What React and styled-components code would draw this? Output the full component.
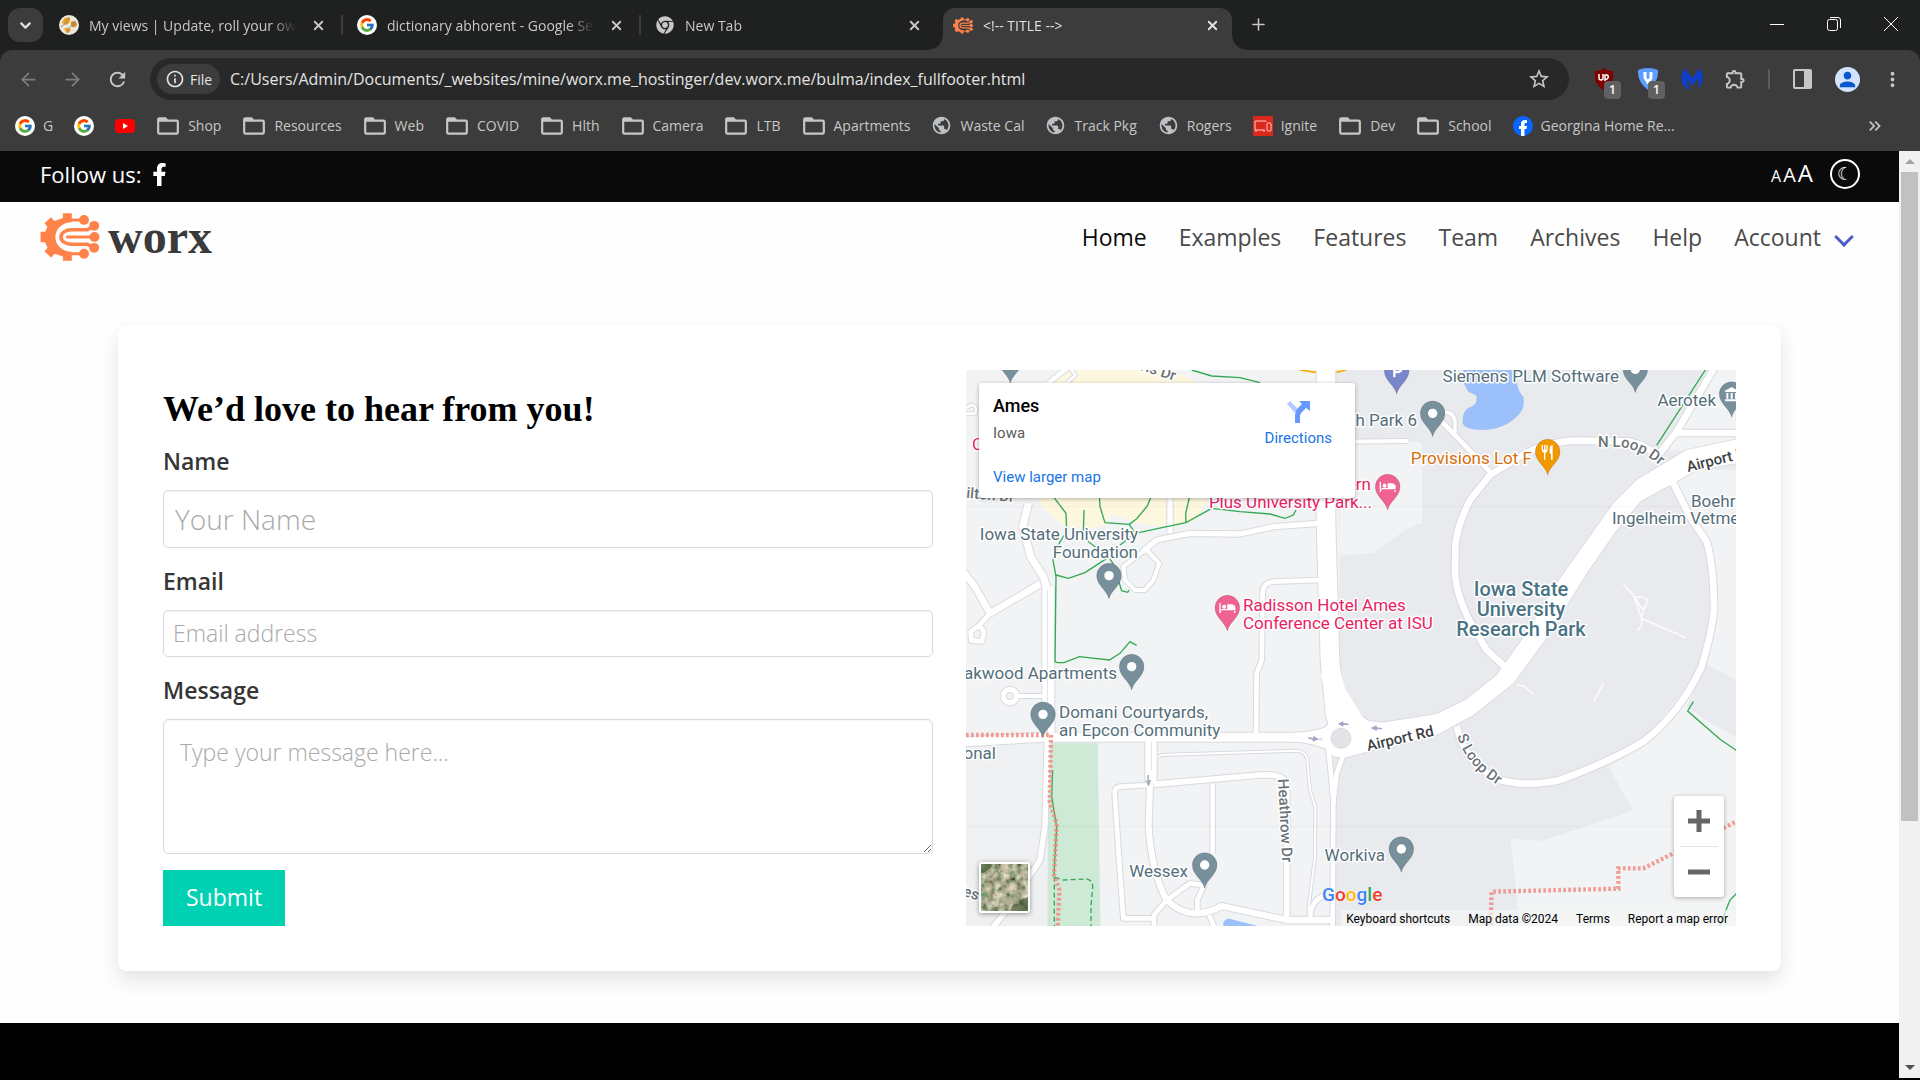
import React from 'react';
import styled, { createGlobalStyle, css } from 'styled-components';
import { ArrowLeft, ArrowRight, ChevronDown, Plus, X } from 'lucide-react';
import { FaChrome, FaFacebookF } from 'react-icons/fa';
import { FcGoogle } from 'react-icons/fc';
import {
  MdFolderOpen,
  MdInfoOutline,
  MdKeyboardDoubleArrowRight,
  MdMoreVert,
  MdOutlineExtension,
  MdPerson,
  MdPublic,
  MdRefresh,
  MdStarBorder,
} from 'react-icons/md';

const tabs = [
  { title: 'My views | Update, roll your own', icon: 'ball' },
  { title: 'dictionary abhorent - Google Search', icon: 'google' },
  { title: 'New Tab', icon: 'chrome' },
  { title: '<!-- TITLE -->', icon: 'worx', active: true },
];

const bookmarks = [
  { label: 'G', icon: 'google' },
  { label: '', icon: 'google' },
  { label: '', icon: 'youtube' },
  { label: 'Shop', icon: 'folder' },
  { label: 'Resources', icon: 'folder' },
  { label: 'Web', icon: 'folder' },
  { label: 'COVID', icon: 'folder' },
  { label: 'Hlth', icon: 'folder' },
  { label: 'Camera', icon: 'folder' },
  { label: 'LTB', icon: 'folder' },
  { label: 'Apartments', icon: 'folder' },
  { label: 'Waste Cal', icon: 'globe' },
  { label: 'Track Pkg', icon: 'globe' },
  { label: 'Rogers', icon: 'globe' },
  { label: 'Ignite', icon: 'ignite' },
  { label: 'Dev', icon: 'folder' },
  { label: 'School', icon: 'folder' },
  { label: 'Georgina Home Re...', icon: 'facebook' },
];

const navLinks = ['Home', 'Examples', 'Features', 'Team', 'Archives', 'Help'];

const SLATE = '#546e7a';
const PINK = '#e91e63';

// map geometry is drawn on a grid three times finer than the labels
const roads = [
  { d: 'M205 430 L188 500 L212 590 L250 650 L265 700', w: 22 },
  { d: 'M265 680 V1130', w: 36 },
  { d: 'M262 1130 L255 1400 L240 1500 L150 1640 L100 1700', w: 16 },
  { d: 'M10 635 L45 680 L90 760 L240 672', w: 20 },
  { d: 'M90 760 L58 796 L32 815 L34 842 L66 844 L72 815 L58 796', w: 14 },
  { d: 'M630 405 V520', w: 16 },
  { d: 'M548 575 L590 540 L690 520 L840 522 L940 500 L1080 490', w: 16 },
  { d: 'M555 570 L490 620 L495 660 L525 690 L555 690 L580 660 L598 610 L560 570', w: 12 },
  { d: 'M1098 20 V490 L1110 900 L1125 1060 L1143 1120', w: 56 },
  { d: 'M1085 660 L940 665 Q910 668 908 695 L905 900 L890 940 L888 1125', w: 14 },
  { d: 'M18 1145 L250 1132 H1000 Q1060 1130 1110 1112', w: 27 },
  { d: 'M573 1140 V1270', w: 34 },
  { d: 'M1000 1134 L1060 1144 L1110 1160', w: 18 },
  { d: 'M2105 305 Q2080 262 2010 245 L1840 242 Q1740 250 1680 290 L1590 345 L1530 420 Q1490 500 1486 560 L1485 640 Q1490 720 1550 820 L1580 870 L1640 925', w: 20 },
  { d: 'M1595 340 L1480 220 L1440 180', w: 14 },
  { d: 'M1485 220 V182 Q1480 155 1450 157', w: 10 },
  { d: 'M1140 245 L1345 243', w: 12 },
  { d: 'M2095 285 L2150 215 L2265 20', w: 20 },
  { d: 'M2150 219 H2330', w: 20 },
  { d: 'M2135 360 L2190 470 L2240 545 Q2262 620 2262 750 Q2255 820 2225 920 Q2160 1060 2050 1145 Q1950 1205 1800 1260 Q1700 1282 1620 1260 Q1520 1220 1490 1100', w: 20 },
  { d: 'M580 1273 L900 1245 Q980 1240 980 1280 V1670', w: 17 },
  { d: 'M570 1275 L480 1280 Q463 1282 464 1300 L480 1540 L490 1675 L580 1675', w: 14 },
  { d: 'M570 1270 L566 1400 Q575 1540 620 1620 Q690 1690 785 1638 L980 1680', w: 18 },
  { d: 'M758 1270 V1480', w: 14 },
  { d: 'M582 1700 V1665 L620 1620 L690 1570 L732 1576 L712 1620 V1660', w: 14 },
  { d: 'M748 1665 L762 1700', w: 14 },
  { d: 'M592 1192 Q600 1184 620 1184 L1010 1172 Q1040 1175 1042 1200 L1050 1290 L1066 1340 L1065 1490 L1045 1650', w: 6 },
  { d: 'M1106 1170 L1120 1320 L1118 1700', w: 14 },
  { d: 'M1152 1180 L1130 1240 L1120 1330', w: 14 },
  { d: 'M975 1680 H1120', w: 20 },
  { d: 'M1050 1670 Q1055 1620 1092 1608', w: 14 },
  { d: 'M175 1008 H250', w: 12 },
  { d: 'M130 1008 a20 20 0 1 0 40 0 a20 20 0 1 0 -40 0', w: 16 },
  { d: 'M262 72 L322 24', w: 14 },
  { d: 'M320 70 L346 45 L330 24', w: 8 },
  { d: 'M14 162 L46 160 Q54 140 36 134 L14 145', w: 8 },
];

const airportRoad =
  'M1140 1040 L1200 1065 L1225 1083 L1265 1088 L1430 1062 L1520 1018 L1610 945 L1685 840 L1790 670 L1960 430 L2030 360 L2110 312 L2180 270 L2340 236 L2340 308 L2210 330 L2130 375 L2040 425 L1970 510 L1880 640 L1755 840 L1660 970 L1540 1065 L1420 1130 L1220 1175 L1150 1195 Z';

const trails = [
  'M695 30 L755 48 L840 53 L900 68',
  'M280 410 L318 460 L320 515 L300 545 L279 600 L288 650 L285 905 L292 908 L312 908 L358 890 L448 900 L480 880 L510 845 L530 856',
  'M372 450 L370 515 L385 545 L445 590 L460 612 L485 692 L503 697 L507 690',
  'M418 405 L420 440 L435 488 L508 493 L530 476 L562 438 L575 405',
  'M508 493 L526 520 L620 500 L678 488 L755 445 L840 455 L930 462 L975 475 L1000 465 L1008 450',
  'M678 488 L677 460 L690 405',
  'M526 520 L480 555',
  'M288 645 L325 655 L375 638 L445 592',
  'M2236 30 L2090 256',
  'M2200 1025 L2183 1053 L2280 1138 L2330 1172',
  'M2330 1600 L2310 1620 L2290 1670 L2278 1700',
  'M278 1230 L275 1310 L290 1400 L282 1545',
];

const dotted = [
  'M18 1125 H268',
  'M273 1125 L269 1325 L290 1390 L282 1545 L298 1590 L293 1700',
  'M1592 1695 L1595 1595 L1975 1586 L1975 1525 L2050 1525 L2140 1480 L2330 1384',
];

const pins = [
  { x: 151, y: 0, color: '#78909c' },
  { x: 447, y: 647, color: '#78909c' },
  { x: 1418, y: 160, color: '#78909c' },
  { x: 2026, y: 28, color: '#78909c' },
  { x: 515, y: 920, color: '#78909c' },
  { x: 249, y: 1063, color: '#78909c' },
  { x: 734, y: 1515, color: '#78909c' },
  { x: 1324, y: 1467, color: '#78909c' },
  { x: 2315, y: 102, color: '#78909c', kind: 'bank' },
  { x: 1310, y: 32, color: '#7986cb', kind: 'parking' },
  { x: 802, y: 743, color: '#f06292', kind: 'bed' },
  { x: 1283, y: 380, color: '#f06292', kind: 'bed' },
  { x: 1763, y: 275, color: '#f29900', kind: 'food' },
];

const labels = [
  { text: 'Iowa State University', x: 172, y: 170, anchor: 'end' },
  { text: 'Foundation', x: 172, y: 188, anchor: 'end' },
  { text: 'Radisson Hotel Ames', x: 277, y: 241, color: PINK },
  { text: 'Conference Center at ISU', x: 277, y: 259, color: PINK },
  { text: 'Oakwood Apartments', x: 151, y: 309, anchor: 'end' },
  { text: 'Domani Courtyards,', x: 93, y: 348 },
  { text: 'an Epcon Community', x: 93, y: 366 },
  { text: 'National', x: 30, y: 389, anchor: 'end' },
  { text: 'Wessex', x: 222, y: 507, anchor: 'end' },
  { text: 'Workiva', x: 419, y: 491, anchor: 'end' },
  { text: 'Siemens PLM Software', x: 653, y: 12, anchor: 'end' },
  { text: 'Aerotek', x: 750, y: 36, anchor: 'end' },
  { text: 'Research Park 6', x: 451, y: 56, anchor: 'end' },
  { text: 'Provisions Lot F', x: 566, y: 94, anchor: 'end', color: '#d56e0c' },
  { text: 'Best Western', x: 405, y: 120, anchor: 'end', color: PINK },
  { text: 'Plus University Park...', x: 406, y: 138, anchor: 'end', color: PINK },
  { text: 'Boehringer', x: 725, y: 137 },
  { text: 'Ingelheim Vetmedica', x: 646, y: 154 },
  { text: 'C', x: 6, y: 80, color: PINK },
];

const GlobalStyle = createGlobalStyle`
  * {
    box-sizing: border-box;
  }
  body {
    margin: 0;
    background: #fff;
    font-family: 'Open Sans', 'Noto Sans', sans-serif;
  }
  a {
    color: inherit;
    text-decoration: none;
  }
  button {
    border: 0;
    padding: 0;
    background: none;
    color: inherit;
    font: inherit;
    cursor: pointer;
  }
`;

const WorxMark = ({ width, height }) => (
  <svg width={width} height={height} viewBox="119 190 181 146" aria-hidden="true">
    <path
      fill="#ff8249"
      d="M215 191 H188 V205 L162 214 L152 203 L132 221 L141 232 L134 247 H120 V279 H134 L141 296 L132 307 L152 325 L163 314 L188 322 V335 H215 V308 A50 45 0 0 1 215 218 Z"
    />
    <g fill="none" stroke="#ff8249" strokeWidth="9">
      <path d="M213 211 H250 M213 314 H250 M198 263 H284" />
      <path strokeWidth="11" d="M283 229 L262 241 H213 A31 22 0 0 0 213 285 H262 L283 296" />
    </g>
    <g fill="#ff8249">
      <circle cx="252" cy="211" r="15" />
      <circle cx="283" cy="229" r="15" />
      <circle cx="284" cy="263" r="15" />
      <circle cx="283" cy="296" r="15" />
      <circle cx="252" cy="314" r="15" />
    </g>
  </svg>
);

const SiteIcon = ({ name }) => {
  switch (name) {
    case 'google':
      return (
        <RoundIcon>
          <FcGoogle size={16} />
        </RoundIcon>
      );
    case 'chrome':
      return <FaChrome size={18} color="#c7c7c7" />;
    case 'worx':
      return <WorxMark width={20} height={17} />;
    case 'folder':
      return <MdFolderOpen size={24} color="#c7c7c7" viewBox="1 2 22 20" />;
    case 'globe':
      return <MdPublic size={21} color="#bdc1c6" />;
    case 'youtube':
      return (
        <svg width="20" height="16" viewBox="0 0 20 16">
          <rect y="1" width="20" height="14" rx="4" fill="#f00" />
          <path d="M8 5 L13 8 L8 11 Z" fill="#fff" />
        </svg>
      );
    case 'ignite':
      return (
        <svg width="20" height="20" viewBox="0 0 20 20">
          <rect width="20" height="20" fill="#da291c" />
          <g fill="none" stroke="#ffc9c4">
            <path d="M13 6 V5 H2 V14 H12" />
            <path d="M3 14 V16 M11 14 V16" />
            <rect x="14" y="7" width="4" height="8" rx="1" />
          </g>
        </svg>
      );
    case 'facebook':
      return (
        <svg width="20" height="20" viewBox="0 0 20 20">
          <circle cx="10" cy="10" r="10" fill="#0866ff" />
          <path
            fill="#fff"
            d="M8 20 V13 H6 V10 H8 V8 Q8 4 12 4 L14 4.200 V7 H12.600 Q11.500 7 11.500 8.200 V10 H14 L13.500 13 H11.500 V20 Z"
          />
        </svg>
      );
    default:
      return (
        <svg width="20" height="22" viewBox="0 0 20 22">
          <circle cx="10" cy="11" r="10" fill="#eee7dc" />
          <path d="M3 9 Q5 2 11 4 Q12 9 7 11 Z" fill="#f0a020" />
          <path d="M12 8 Q17 5 18 11 Q15 15 12 12 Z" fill="#d8891c" />
          <path d="M5 15 Q9 12 12 16 Q10 20 7 18 Z" fill="#f0a020" />
          <path d="M2 13 Q8 10 10 3 M8 19 Q10 12 17 8" fill="none" stroke="#8c8c8c" />
        </svg>
      );
  }
};

const MapPin = ({ x, y, color, kind }) => (
  <g transform={`translate(${x} ${y})`}>
    <path
      d="M0 70 C-6 42 -37 30 -37 0 A37 37 0 0 1 37 0 C37 30 6 42 0 70 Z"
      fill={color}
      stroke="rgba(0,0,0,0.2)"
      strokeWidth="2"
    />
    {!kind && <circle r="14" fill="#fff" />}
    {kind === 'bed' && (
      <path
        fill="#fff"
        fillRule="evenodd"
        d="M-24 -14 H-20 V8 H20 V-4 Q20 -10 14 -10 H0 V4 H-18 V12 H-20 V16 H-24 Z M20 8 H24 V16 H20 Z M20 -8 L24 -4 V10 H20 Z M-10 -9 a6 6 0 1 0 1 0 Z"
      />
    )}
    {kind === 'food' && (
      <path
        fill="#fff"
        d="M-18 -20 H-14 V-6 H-11 V-20 H-7 V-6 H-4 V-20 H0 V-6 Q0 2 -7 3 V24 H-11 V3 Q-18 2 -18 -6 Z M6 -12 Q8 -20 15 -21 V24 H10 V6 H6 Z"
      />
    )}
    {kind === 'bank' && (
      <path
        fill="#fff"
        d="M-20 -10 L0 -21 L20 -10 V-6 H-20 Z M-16 -3 H-10 V14 H-16 Z M-3 -3 H3 V14 H-3 Z M10 -3 H16 V14 H10 Z M-20 16 H20 V22 H-20 Z"
      />
    )}
    {kind === 'parking' && (
      <path fill="none" stroke="#fff" strokeWidth="7" d="M-7 20 V-18 H3 Q14 -18 14 -7 Q14 4 3 4 H-7" />
    )}
  </g>
);

const StreetMap = () => (
  <MapDrawing viewBox="0 0 770 556" preserveAspectRatio="xMidYMid slice" role="img" aria-label="Map of Ames, Iowa">
    <defs>
      <path id="nloop" d="M632 77 H652 Q674 78 698 99" />
      <path id="sloop" d="M491 366 Q503 402 544 422" />
    </defs>
    <g transform="translate(-6 -10) scale(0.3333333)">
      <rect x="18" y="30" width="2310" height="1668" fill="#f1f3f4" />
      <path
        fill="#e8eaed"
        d="M1128 30 H2265 L2110 270 L2328 280 V330 H2130 L2240 545 L2268 700 L2262 790 L2225 920 L2050 1145 L1945 1220 L2020 1352 L1745 1442 L1652 1437 L1680 1698 H1120 V1180 L1140 585 Z"
      />
      <path fill="#f1f3f4" d="M1140 245 H1370 Q1386 245 1387 262 V490 Q1340 500 1310 530 L1240 580 L1140 586 Z" />
      <path fill="#e8eaed" d="M2240 912 L2328 960 V1130 L2260 1095 L2180 1040 Z" />
      <path fill="#eff0f2" d="M18 1150 H262 V1698 H18 Z" />
      <path
        fill="#fef7e0"
        d="M320 30 H640 L720 72 L745 405 Q720 480 690 488 Q610 505 540 492 L455 463 L440 495 Q370 515 320 500 Q250 460 225 400 V100 L250 66 Z"
      />
      <path
        fill="#9cc0f9"
        d="M1510 30 V68 L1525 95 L1548 106 Q1556 130 1530 142 Q1506 150 1508 190 Q1515 210 1570 210 Q1640 208 1680 160 Q1696 140 1690 110 Q1668 90 1668 30 Z M790 1690 Q792 1676 808 1676 L900 1700 H790 Z"
      />
      <path fill="#cee9d6" d="M265 1150 H413 L421 1698 H262 Z" />
      <g fill="none" stroke="#d8dadf" strokeLinejoin="round">
        {roads.map(({ d, w }) => (
          <path key={d} d={d} strokeWidth={w + 6} />
        ))}
        <path d={airportRoad} strokeWidth="5" />
        <circle cx="1143" cy="1135" r="42" strokeWidth="36" />
      </g>
      <g fill="none" stroke="#fff" strokeLinejoin="round">
        {roads.map(({ d, w }) => (
          <path key={d} d={d} strokeWidth={w} />
        ))}
        <path d={airportRoad} fill="#fff" stroke="none" />
        <path d="M1082 940 L1140 930 L1155 985 L1210 1075 L1120 1110 L1108 1050 Z" fill="#fff" stroke="none" />
        <circle cx="1143" cy="1135" r="42" strokeWidth="30" />
      </g>
      <circle cx="1143" cy="1135" r="30" fill="#e3e4e8" stroke="#d0d2da" strokeWidth="2" />
      <path d="M262 690 V1120 M574 1145 V1230" stroke="#e0e2e6" strokeWidth="3" />
      <g fill="none" stroke="#fafbfa" strokeWidth="5">
        <path d="M1990 673 L2020 705 L2045 775 L2177 833 M2045 775 V795 L2033 812 M2045 770 L2062 722 Q2055 706 2025 712 M2020 705 L2045 745 L2055 740" />
        <path d="M1670 973 L1695 980 L1720 1002 M1930 970 L1902 1023" />
      </g>
      <path d="M1020 30 L1068 37 M1130 37 L1160 29" stroke="#f9ab00" strokeWidth="5" />
      <g fill="none" stroke="#34a853" strokeWidth="4">
        {trails.map((d) => (
          <path key={d} d={d} />
        ))}
        <path strokeDasharray="15 9" d="M283 1550 V1700 M285 1552 L310 1560 L380 1557 Q398 1560 398 1580 L393 1640 V1700" />
      </g>
      <g fill="none" stroke="#f28b82" strokeWidth="13" strokeDasharray="8 7" opacity="0.85">
        {dotted.map((d) => (
          <path key={d} d={d} />
        ))}
      </g>
      <g fill="#a3a5c3">
        <path d="M1045 1131 L1060 1134 V1127 L1077 1138 L1058 1145 V1139 L1045 1136 Z" />
        <path d="M1133 1091 L1150 1084 V1089 L1166 1091 V1095 L1150 1095 V1100 Z" />
        <path d="M1232 1104 L1250 1096 V1102 L1266 1104 V1108 L1250 1108 V1113 Z" />
      </g>
      <path d="M562 1245 H567 V1260 H574 L566 1280 L556 1262 H562 Z" fill="#a6b1bb" />
      <path d="M18 440 H2328 M18 1400 H2328" stroke="#000" strokeOpacity="0.04" strokeWidth="3" />
      {pins.map((pin) => (
        <MapPin key={`${pin.x}-${pin.y}`} {...pin} />
      ))}
    </g>
    {labels.map(({ text, x, y, anchor, color }) => (
      <MapLabel key={text} x={x} y={y} textAnchor={anchor} $color={color}>
        {text}
      </MapLabel>
    ))}
    <AreaLabel textAnchor="middle">
      <tspan x="555" y="226">Iowa State</tspan>
      <tspan x="555" y="246">University</tspan>
      <tspan x="555" y="266">Research Park</tspan>
    </AreaLabel>
    <RoadLabel $strong transform="translate(402 381) rotate(-13)">Airport Rd</RoadLabel>
    <RoadLabel $strong transform="translate(722 102) rotate(-14)">Airport Rd</RoadLabel>
    <RoadLabel transform="translate(312 409) rotate(87)">Heathrow Dr</RoadLabel>
    <RoadLabel textAnchor="end" transform="translate(48 132) rotate(5)">Hamilton Dr</RoadLabel>
    <RoadLabel textAnchor="end" transform="translate(208 11) rotate(18)">Harris Dr</RoadLabel>
    <RoadLabel textAnchor="end" transform="translate(16 532) rotate(18)">West</RoadLabel>
    <RoadLabel>
      <textPath href="#nloop">N Loop Dr</textPath>
    </RoadLabel>
    <RoadLabel>
      <textPath href="#sloop">S Loop Dr</textPath>
    </RoadLabel>
  </MapDrawing>
);

const TabStrip = () => (
  <TabBar>
    <TabSearch aria-label="Search tabs">
      <ChevronDown size={17} strokeWidth={3} />
    </TabSearch>
    <TabList>
      {tabs.map(({ title, icon, active }) => (
        <Tab key={title} $active={active}>
          <TabIcon>
            <SiteIcon name={icon} />
          </TabIcon>
          <TabTitle>{title}</TabTitle>
          <TabClose aria-label={`Close ${title}`}>
            <X size={15} strokeWidth={3} />
          </TabClose>
        </Tab>
      ))}
    </TabList>
    <NewTab aria-label="New tab">
      <Plus size={19} />
    </NewTab>
    <WindowButtons>
      <button aria-label="Minimize">
        <svg width="14" height="14" viewBox="0 0 14 14">
          <path d="M0 7.500 H14" stroke="#fff" />
        </svg>
      </button>
      <button aria-label="Restore">
        <svg width="14" height="14" viewBox="0 0 14 14" fill="none" stroke="#fff">
          <rect x="0.500" y="2.500" width="10" height="11" rx="2" />
          <path d="M3 0.500 H11 Q13.500 0.500 13.500 3 V11" />
        </svg>
      </button>
      <button aria-label="Close window">
        <svg width="14" height="14" viewBox="0 0 14 14">
          <path d="M0 0 L14 14 M14 0 L0 14" stroke="#fff" />
        </svg>
      </button>
    </WindowButtons>
  </TabBar>
);

const Toolbar = () => (
  <ToolbarRow>
    <NavButtons>
      <button aria-label="Back" disabled>
        <ArrowLeft size={21} />
      </button>
      <button aria-label="Forward" disabled>
        <ArrowRight size={21} />
      </button>
      <button aria-label="Reload">
        <MdRefresh size={23} />
      </button>
    </NavButtons>
    <AddressBar>
      <FileChip>
        <MdInfoOutline size={20} />
        File
      </FileChip>
      <AddressInput
        aria-label="Address"
        defaultValue="C:/Users/Admin/Documents/_websites/mine/worx.me_hostinger/dev.worx.me/bulma/index_fullfooter.html"
      />
      <button aria-label="Bookmark this page">
        <MdStarBorder size={24} />
      </button>
    </AddressBar>
    <Extensions>
      <ExtensionButton aria-label="Ad blocker">
        <svg width="20" height="22" viewBox="0 0 20 22">
          <path fill="#800000" d="M10 0 Q13 3 19 3 V11 Q18 18 10 22 Q2 18 1 11 V3 Q7 3 10 0 Z" />
          <path fill="none" stroke="#fff" strokeWidth="1.500" d="M5 6 V11 Q7 13 9 11 V6 M11 13 V7 H13 Q15 8 14 10 Q13 12 11 11" />
        </svg>
        <Badge>1</Badge>
      </ExtensionButton>
      <ExtensionButton aria-label="Privacy shield">
        <svg width="22" height="22" viewBox="0 0 22 22">
          <path fill="#5c9dff" d="M1 2 Q11 -2 21 2 Q22 14 11 22 Q0 14 1 2 Z" />
          <path fill="none" stroke="#fff" strokeWidth="3" d="M8 4 V9 Q9 13 11 13 Q14 12 14 9 V4 M11 12 V16" />
        </svg>
        <Badge>1</Badge>
      </ExtensionButton>
      <ExtensionButton aria-label="Malware scanner">
        <svg width="22" height="22" viewBox="0 0 22 22">
          <path
            fill="#0d3ecc"
            d="M3 0 L11 10 L19 0 Q23 8 21 15 Q20 18 17 20 Q18 14 17 10 L11 18 L6 11 Q6 19 11 22 Q4 21 1 15 Q-1 8 3 0 Z"
          />
        </svg>
      </ExtensionButton>
      <ExtensionButton aria-label="Extensions">
        <MdOutlineExtension size={24} />
      </ExtensionButton>
      <ToolbarDivider />
      <ExtensionButton aria-label="Side panel">
        <svg width="19" height="20" viewBox="0 0 19 20">
          <rect x="1" y="1" width="17" height="18" rx="1" fill="none" stroke="#c7c7c7" strokeWidth="2" />
          <path d="M11 1 H18 V19 H11 Z" fill="#c7c7c7" />
        </svg>
      </ExtensionButton>
      <Avatar aria-label="Profile">
        <MdPerson size={23} />
      </Avatar>
      <ExtensionButton aria-label="Menu">
        <MdMoreVert size={25} />
      </ExtensionButton>
    </Extensions>
  </ToolbarRow>
);

const BookmarkBar = () => (
  <BookmarkRow>
    {bookmarks.map(({ label, icon }, index) => (
      <Bookmark key={index} href="#" aria-label={label || icon}>
        <BookmarkIcon>
          <SiteIcon name={icon} />
        </BookmarkIcon>
        {label}
      </Bookmark>
    ))}
    <MoreBookmarks aria-label="More bookmarks">
      <MdKeyboardDoubleArrowRight size={20} />
    </MoreBookmarks>
  </BookmarkRow>
);

const ContactForm = () => (
  <Form onSubmit={(e) => e.preventDefault()}>
    <FormTitle>We’d love to hear from you!</FormTitle>
    <Field>
      <label htmlFor="name">Name</label>
      <TextInput id="name" type="text" placeholder="Your Name" $large />
    </Field>
    <Field>
      <label htmlFor="email">Email</label>
      <TextInput id="email" type="email" placeholder="Email address" />
    </Field>
    <Field>
      <label htmlFor="message">Message</label>
      <MessageBox id="message" placeholder="Type your message here..." />
    </Field>
    <SubmitButton type="submit">Submit</SubmitButton>
  </Form>
);

const LocationMap = () => (
  <MapFrame>
    <StreetMap />
    <PlaceCard>
      <PlaceInfo>
        <strong>Ames</strong>
        <span>Iowa</span>
        <a href="#">View larger map</a>
      </PlaceInfo>
      <Directions href="#">
        <svg width="24" height="24" viewBox="0 0 24 24">
          <path d="M1 4 L4 1 L12 9 L9 13 Z" fill="#b3cbff" />
          <path d="M9 23 V15 Q9 11 12 8 L16 4 L13 1 H24 V11 L20 8 L16 12 Q14 14 14 16 V23 Z" fill="#6699ff" />
        </svg>
        Directions
      </Directions>
    </PlaceCard>
    <SatelliteButton aria-label="Show satellite imagery">
      <svg width="47" height="47" viewBox="0 0 47 47">
        <filter id="terrain">
          <feTurbulence type="fractalNoise" baseFrequency="0.14" numOctaves="5" seed="4" />
          <feColorMatrix values="1.1 0.3 0 0 -0.280  0.9 0.5 0 0 -0.270  0.8 0.3 0 0 -0.260  0 0 0 0 1" />
        </filter>
        <rect width="47" height="47" filter="url(#terrain)" />
        <path d="M22 0 V47 M0 27 H47" stroke="#b5ab93" strokeOpacity="0.6" />
        <path d="M30 47 Q30 38 47 33 V47 Z M0 0 H12 Q8 8 0 9 Z" fill="#2f4a26" fillOpacity="0.6" />
        <path d="M24 33 Q32 34 38 28 V40 H24 Z" fill="#a9a58c" fillOpacity="0.6" />
      </svg>
    </SatelliteButton>
    <ZoomControls>
      <button aria-label="Zoom in">
        <svg width="22" height="22" viewBox="0 0 22 22">
          <path d="M11 0 V22 M0 11 H22" stroke="#666" strokeWidth="5" />
        </svg>
      </button>
      <button aria-label="Zoom out">
        <svg width="22" height="22" viewBox="0 0 22 22">
          <path d="M0 11 H22" stroke="#666" strokeWidth="5" />
        </svg>
      </button>
    </ZoomControls>
    <GoogleLogo href="#">
      <Letter $color="#4285f4">G</Letter>
      <Letter $color="#ea4335">o</Letter>
      <Letter $color="#fbbc04">o</Letter>
      <Letter $color="#4285f4">g</Letter>
      <Letter $color="#34a853">l</Letter>
      <Letter $color="#ea4335">e</Letter>
    </GoogleLogo>
    <MapCredits>
      <button>Keyboard shortcuts</button>
      <span>Map data ©2024</span>
      <a href="#">Terms</a>
      <a href="#">Report a map error</a>
    </MapCredits>
  </MapFrame>
);

const App = () => (
  <Window>
    <GlobalStyle />
    <Chrome>
      <TabStrip />
      <Toolbar />
      <BookmarkBar />
    </Chrome>
    <Viewport>
      <Page>
        <TopBar>
          <FollowUs>
            Follow us:
            <a href="#" aria-label="Facebook">
              <FaFacebookF size={23} />
            </a>
          </FollowUs>
          <TextSizes>
            <SizeButton $size={16} aria-label="Small text">A</SizeButton>
            <SizeButton $size={20} aria-label="Medium text">A</SizeButton>
            <SizeButton $size={24} aria-label="Large text">A</SizeButton>
            <ThemeToggle aria-label="Dark mode">☾</ThemeToggle>
          </TextSizes>
        </TopBar>
        <NavBar>
          <Brand href="#">
            <WorxMark width={60} height={48} />
            worx
          </Brand>
          <NavMenu>
            {navLinks.map((name) => (
              <NavLink key={name} href="#" $active={name === 'Home'}>
                {name}
              </NavLink>
            ))}
            <NavLink href="#">
              Account
              <NavArrow />
            </NavLink>
          </NavMenu>
        </NavBar>
        <Main>
          <Card>
            <ContactForm />
            <LocationMap />
          </Card>
        </Main>
        <Footer />
      </Page>
      <ScrollBar aria-hidden="true">
        <ScrollArrow $up />
        <ScrollThumb />
        <ScrollArrow />
      </ScrollBar>
    </Viewport>
  </Window>
);

const flexCenter = css`
  display: flex;
  align-items: center;
  justify-content: center;
`;

const Window = styled.div`
  display: flex;
  flex-direction: column;
  min-height: 100vh;
`;

const Chrome = styled.div`
  background: #1f2120;
  color: #c7c7c7;
  font-size: 14px;
`;

const TabBar = styled.div`
  display: flex;
  align-items: flex-end;
  height: 50px;
  padding-left: 8px;
`;

const TabSearch = styled.button`
  ${flexCenter}
  width: 35px;
  height: 34px;
  margin-bottom: 8px;
  border-radius: 12px;
  background: #3c3c3c;
  color: #e3e3e3;
`;

const TabList = styled.div`
  display: flex;
  gap: 9px;
  margin-left: 6px;
`;

const Tab = styled.div`
  position: relative;
  display: flex;
  align-items: center;
  width: 289px;
  height: 42px;
  padding: 0 12px 8px 10px;
  border-radius: 12px 12px 0 0;
  & + &::before {
    content: '';
    position: absolute;
    left: -6px;
    top: 7px;
    width: 2px;
    height: 20px;
    background: #3c3c3c;
  }
  ${({ $active }) =>
    $active &&
    css`
      background: #3c3c3c;
      color: #e3e3e3;
      & + &::before,
      &&::before,
      &&::after {
        content: '';
        position: absolute;
        top: auto;
        bottom: 0;
        left: -14px;
        width: 14px;
        height: 14px;
        background: radial-gradient(circle at 0 0, transparent 13px, #3c3c3c 14px);
      }
      &&::after {
        left: 100%;
        background: radial-gradient(circle at 100% 0, transparent 13px, #3c3c3c 14px);
      }
    `}
`;

const TabIcon = styled.span`
  ${flexCenter}
  width: 20px;
`;

const TabTitle = styled.span`
  flex: 1;
  margin: 0 14px 0 10px;
  overflow: hidden;
  white-space: nowrap;
  mask-image: linear-gradient(90deg, #000 88%, transparent);
`;

const TabClose = styled.button`
  ${flexCenter}
  width: 16px;
`;

const RoundIcon = styled.span`
  ${flexCenter}
  width: 20px;
  height: 20px;
  border-radius: 50%;
  background: #fff;
`;

const NewTab = styled.button`
  ${flexCenter}
  margin: 0 0 16px 17px;
`;

const WindowButtons = styled.div`
  display: flex;
  align-self: center;
  gap: 43px;
  margin: 0 22px 0 auto;
`;

const ToolbarRow = styled.div`
  display: flex;
  align-items: center;
  height: 50px;
  padding: 8px 16px 0 18px;
  border-radius: 12px 12px 0 0;
  background: #3c3c3c;
`;

const NavButtons = styled.div`
  display: flex;
  gap: 23px;
  width: 132px;
  button {
    ${flexCenter}
  }
  button:disabled {
    color: #7f7f7f;
  }
`;

const AddressBar = styled.div`
  display: flex;
  flex: 1;
  align-items: center;
  height: 42px;
  padding: 0 18px 0 7px;
  border-radius: 21px;
  background: #282828;
  button {
    ${flexCenter}
  }
`;

const FileChip = styled.span`
  ${flexCenter}
  gap: 5px;
  width: 63px;
  height: 30px;
  border-radius: 15px;
  background: #3c3c3c;
  color: #e3e3e3;
`;

const AddressInput = styled.input`
  flex: 1;
  margin-left: 10px;
  padding: 0;
  border: 0;
  outline: 0;
  background: none;
  color: #e3e3e3;
  font-family: inherit;
  font-size: 16px;
`;

const Extensions = styled.div`
  display: flex;
  align-items: center;
  gap: 21px;
  margin-left: 23px;
`;

const ExtensionButton = styled.button`
  ${flexCenter}
  position: relative;
  width: 23px;
`;

const Badge = styled.span`
  position: absolute;
  right: -6px;
  bottom: -9px;
  width: 17px;
  height: 18px;
  border-radius: 4px;
  background: #5f6061;
  color: #fff;
  font-size: 12px;
  font-weight: 600;
  line-height: 18px;
`;

const ToolbarDivider = styled.span`
  width: 2px;
  height: 20px;
  background: #5c5c5c;
`;

const Avatar = styled.button`
  ${flexCenter}
  width: 25px;
  height: 25px;
  border-radius: 50%;
  background: #d3e3fd;
  color: #0b57d0;
`;

const BookmarkRow = styled.nav`
  display: flex;
  align-items: center;
  gap: 21px;
  height: 51px;
  padding: 0 35px 0 15px;
  background: #3c3c3c;
`;

const Bookmark = styled.a`
  display: flex;
  align-items: center;
  gap: 8px;
  white-space: nowrap;
`;

const BookmarkIcon = styled.span`
  ${flexCenter}
`;

const MoreBookmarks = styled.button`
  ${flexCenter}
  margin-left: auto;
`;

const Viewport = styled.div`
  display: flex;
  flex: 1;
`;

const Page = styled.div`
  display: flex;
  flex: 1;
  flex-direction: column;
  background: #fefefe;
  font-size: 23px;
  line-height: 34px;
`;

const TopBar = styled.div`
  display: flex;
  align-items: center;
  justify-content: space-between;
  height: 51px;
  padding: 0 39px 5px 40px;
  background: #0a0a0a;
  color: #fff;
  font-size: 22px;
`;

const FollowUs = styled.div`
  display: flex;
  align-items: center;
  gap: 7px;
  a {
    display: flex;
  }
`;

const TextSizes = styled.div`
  display: flex;
  align-items: baseline;
  gap: 2px;
`;

const SizeButton = styled.button`
  font-size: ${({ $size }) => $size}px;
`;

const ThemeToggle = styled.button`
  ${flexCenter}
  align-self: center;
  width: 30px;
  height: 30px;
  margin-left: 15px;
  border: 2px solid #fff;
  border-radius: 50%;
  font-family: 'DejaVu Sans', sans-serif;
  font-size: 18px;
  line-height: 26px;
`;

const NavBar = styled.header`
  display: flex;
  align-items: center;
  justify-content: space-between;
  height: 70px;
  padding: 0 45px 0 40px;
`;

const Brand = styled.a`
  display: flex;
  align-items: center;
  gap: 8px;
  color: #3a3a3a;
  font-family: 'Liberation Serif', serif;
  font-size: 48px;
  font-weight: 700;
  line-height: 48px;
`;

const NavMenu = styled.nav`
  display: flex;
  gap: 32px;
`;

const NavLink = styled.a`
  display: flex;
  align-items: center;
  color: ${({ $active }) => ($active ? '#0a0a0a' : '#4a4a4a')};
`;

const NavArrow = styled.span`
  width: 14px;
  height: 14px;
  margin: 0 3px 0 16px;
  border: solid #485fc7;
  border-width: 0 0 3px 3px;
  transform: rotate(-45deg);
`;

const Main = styled.main`
  padding: 53px 118px 52px;
`;

const Card = styled.section`
  display: grid;
  grid-template-columns: 1fr 1fr;
  gap: 33px;
  padding: 45px;
  border-radius: 8px;
  background: #fff;
  box-shadow:
    0 10px 20px rgba(10, 10, 10, 0.1),
    0 0 1px rgba(10, 10, 10, 0.1);
`;

const Form = styled.form`
  display: flex;
  flex-direction: column;
  align-items: flex-start;
  gap: 16px;
`;

const FormTitle = styled.h2`
  margin: 20px 0 0;
  color: #000;
  font-family: 'Liberation Serif', serif;
  font-size: 36px;
  font-weight: 700;
  line-height: 38px;
`;

const Field = styled.div`
  display: flex;
  flex-direction: column;
  gap: 12px;
  width: 100%;
  label {
    color: #363636;
    font-weight: 600;
  }
`;

const fieldBox = css`
  width: 100%;
  border: 1px solid #dbdbdb;
  border-radius: 5px;
  outline: 0;
  background: #fff;
  box-shadow: inset 0 1px 2px rgba(10, 10, 10, 0.05);
  color: #363636;
  font-family: inherit;
  font-size: 23px;
  font-weight: 300;
  &::placeholder {
    color: #a9a9a9;
  }
`;

const TextInput = styled.input`
  ${fieldBox}
  height: 47px;
  padding: 0 9px 2px;
  ${({ $large }) =>
    $large &&
    css`
      height: 58px;
      padding: 0 11px;
      font-size: 28px;
    `}
`;

const MessageBox = styled.textarea`
  ${fieldBox}
  display: block;
  height: 135px;
  padding: 15px 16px;
  line-height: 34px;
  resize: vertical;
`;

const SubmitButton = styled.button`
  height: 56px;
  padding: 0 23px 2px;
  background: #00d1b2;
  color: #fff;
`;

const MapFrame = styled.div`
  position: relative;
  overflow: hidden;
  font-family: Roboto, sans-serif;
  font-size: 15px;
  line-height: 20px;
`;

const MapDrawing = styled.svg`
  position: absolute;
  width: 100%;
  height: 100%;
`;

const MapLabel = styled.text`
  fill: ${({ $color }) => $color || SLATE};
  font-size: 17px;
  paint-order: stroke;
  stroke: #fff;
  stroke-width: 3px;
  stroke-linejoin: round;
`;

const AreaLabel = styled(MapLabel)`
  fill: #4a7485;
  font-size: 20px;
  font-weight: 500;
`;

const RoadLabel = styled(MapLabel)`
  fill: ${({ $strong }) => ($strong ? '#3c4043' : '#6b7278')};
  font-size: 15px;
  font-weight: 500;
`;

const PlaceCard = styled.div`
  position: absolute;
  top: 13px;
  left: 13px;
  display: flex;
  justify-content: space-between;
  width: 376px;
  height: 115px;
  padding: 13px 23px 11px 14px;
  border-radius: 3px;
  background: #fff;
  box-shadow: 0 1px 4px rgba(0, 0, 0, 0.3);
`;

const PlaceInfo = styled.div`
  display: flex;
  flex-direction: column;
  strong {
    color: #000;
    font-size: 18px;
    font-weight: 500;
  }
  span {
    margin-top: 7px;
    color: #5b5b5b;
  }
  a {
    margin-top: auto;
    color: #1a73e8;
  }
`;

const Directions = styled.a`
  display: flex;
  flex-direction: column;
  align-items: center;
  gap: 4px;
  padding-top: 4px;
  color: #1a73e8;
`;

const SatelliteButton = styled.button`
  position: absolute;
  left: 13px;
  bottom: 13px;
  width: 51px;
  height: 51px;
  border: 2px solid #fff;
  border-radius: 3px;
  box-shadow: 0 1px 5px rgba(0, 0, 0, 0.4);
  svg {
    display: block;
  }
`;

const ZoomControls = styled.div`
  position: absolute;
  right: 12px;
  bottom: 29px;
  width: 50px;
  border-radius: 3px;
  background: #fff;
  box-shadow: 0 1px 4px rgba(0, 0, 0, 0.3);
  button {
    ${flexCenter}
    width: 38px;
    height: 50px;
    margin: 0 6px;
  }
  button + button {
    height: 51px;
    border-top: 1px solid #e6e6e6;
  }
`;

const GoogleLogo = styled.a`
  position: absolute;
  left: 356px;
  bottom: 19px;
  font-size: 19px;
  line-height: 24px;
`;

const Letter = styled.span`
  color: ${({ $color }) => $color};
  font-weight: 500;
  text-shadow: 0 0 2px #fff;
`;

const MapCredits = styled.div`
  position: absolute;
  right: 0;
  bottom: 0;
  display: flex;
  gap: 18px;
  padding: 2px 8px 0 5px;
  background: rgba(245, 245, 245, 0.7);
  color: #000;
  font-size: 12px;
  line-height: 14px;
`;

const Footer = styled.footer`
  flex: 1;
  background: #000;
`;

const ScrollBar = styled.div`
  display: flex;
  flex-direction: column;
  width: 21px;
  margin-bottom: 2px;
  background: #f1f1f1;
  box-shadow: 0 2px #000;
`;

const ScrollArrow = styled.span`
  ${flexCenter}
  height: 21px;
  ${({ $up }) => !$up && 'margin-top: auto;'}
  &::before {
    content: '';
    border: 5px solid transparent;
    ${({ $up }) =>
      $up
        ? 'border-top: 0; border-bottom-color: #a3a3a3;'
        : 'border-bottom: 0; border-top-color: #505050;'}
  }
`;

const ScrollThumb = styled.span`
  flex: 0 0 70%;
  margin: 0 2px;
  background: #c1c1c1;
`;

export default App;
